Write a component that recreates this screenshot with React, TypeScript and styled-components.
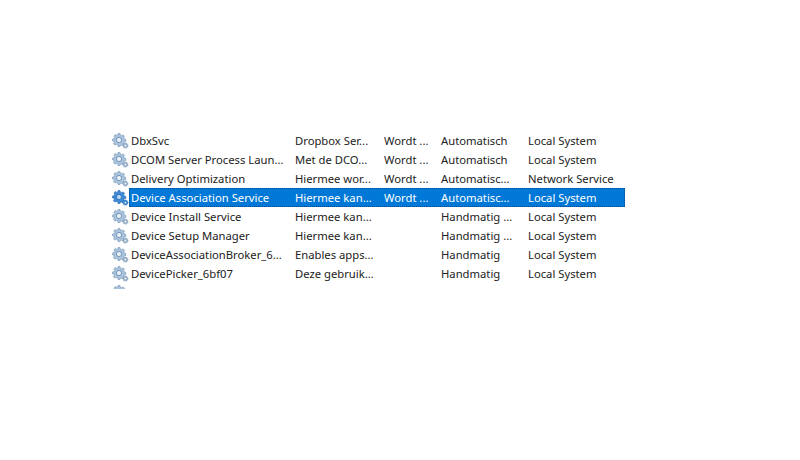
import styled, { createGlobalStyle } from "styled-components";

const services = [
  { name: "DbxSvc", desc: "Dropbox Ser...", status: "Wordt ...", start: "Automatisch", logon: "Local System" },
  { name: "DCOM Server Process Laun...", desc: "Met de DCO...", status: "Wordt ...", start: "Automatisch", logon: "Local System" },
  { name: "Delivery Optimization", desc: "Hiermee wor...", status: "Wordt ...", start: "Automatisc...", logon: "Network Service" },
  { name: "Device Association Service", desc: "Hiermee kan...", status: "Wordt ...", start: "Automatisc...", logon: "Local System", selected: true },
  { name: "Device Install Service", desc: "Hiermee kan...", status: "", start: "Handmatig ...", logon: "Local System" },
  { name: "Device Setup Manager", desc: "Hiermee kan...", status: "", start: "Handmatig ...", logon: "Local System" },
  { name: "DeviceAssociationBroker_6...", desc: "Enables apps...", status: "", start: "Handmatig", logon: "Local System" },
  { name: "DevicePicker_6bf07", desc: "Deze gebruik...", status: "", start: "Handmatig", logon: "Local System" },
  { name: "", desc: "", status: "", start: "", logon: "" },
];

const teeth =
  "M6 .6h2l.4 1.7 1.2.5 1.5-.9 1.4 1.4-.9 1.5.5 1.2 1.7.4v2l-1.7.4-.5 1.2.9 1.5-1.4 1.4-1.5-.9-1.2.5L8 13.4H6l-.4-1.7-1.2-.5-1.5.9-1.4-1.4.9-1.5-.5-1.2L.6 8V6l1.7-.4.5-1.2-.9-1.5 1.4-1.4 1.5.9 1.2-.5z";

const GearIcon = ({ dark }: { dark?: boolean }) => (
  <svg width="17" height="16" viewBox="0 0 17 16">
    <path d={teeth} fill={dark ? "#3d8ad6" : "#a8c4e0"} stroke={dark ? "#2a6db5" : "#7c98b4"} strokeWidth="0.7" />
    <circle cx="7" cy="7" r="2.6" fill={dark ? "#bcdaf6" : "#eaf2fa"} stroke={dark ? "#2a6db5" : "#6f8dab"} strokeWidth="0.9" />
    <circle cx="13.4" cy="12.6" r="2.5" fill={dark ? "#3d8ad6" : "#9db5cd"} stroke={dark ? "#2a6db5" : "#7c98b4"} strokeWidth="0.8" strokeDasharray="1.2 0.6" />
    <circle cx="13.4" cy="12.6" r="0.8" fill="#fff" />
  </svg>
);

export default function App() {
  return (
    <>
      <GlobalStyle />
      <Page>
        <List>
          {services.map((s, i) => (
            <Row key={i}>
              <IconSlot>
                <GearIcon dark={s.selected} />
              </IconSlot>
              <Cells $selected={s.selected}>
                <NameCell>{s.name}</NameCell>
                <DescCell>{s.desc}</DescCell>
                <StatusCell>{s.status}</StatusCell>
                <StartCell>{s.start}</StartCell>
                <LogonCell>{s.logon}</LogonCell>
              </Cells>
            </Row>
          ))}
        </List>
      </Page>
    </>
  );
}

const GlobalStyle = createGlobalStyle`
  html, body {
    margin: 0;
    padding: 0;
    background: #fff;
  }
`;

const Page = styled.div`
  width: 800px;
  height: 460px;
  padding: 131px 0 0 112px;
  box-sizing: border-box;
  overflow: hidden;
  font-family: "Noto Sans", "Open Sans", sans-serif;
  font-size: 11.25px;
  color: #222;
`;

const List = styled.div`
  display: flex;
  flex-direction: column;
  height: 158px;
  overflow: hidden;
`;

const Row = styled.div`
  display: flex;
  flex: none;
  height: 19px;
`;

const IconSlot = styled.div`
  display: flex;
  align-items: center;
  width: 17px;
  height: 19px;
  flex: none;
`;

const Cells = styled.div<{ $selected?: boolean }>`
  display: flex;
  align-items: center;
  width: 496px;
  height: 19px;
  padding-left: 2px;
  box-sizing: border-box;
  background: ${(p) => (p.$selected ? "#0078d7" : "transparent")};
  color: ${(p) => (p.$selected ? "#fff" : "inherit")};
  outline: ${(p) => (p.$selected ? "1px dotted #0a4a8c" : "none")};
  outline-offset: -1px;
`;

const Cell = styled.span`
  flex: none;
  white-space: nowrap;
`;

const NameCell = styled(Cell)`
  width: 164px;
`;

const DescCell = styled(Cell)`
  width: 89px;
`;

const StatusCell = styled(Cell)`
  width: 57px;
`;

const StartCell = styled(Cell)`
  width: 87px;
`;

const LogonCell = styled(Cell)`
  width: 97px;
`;
